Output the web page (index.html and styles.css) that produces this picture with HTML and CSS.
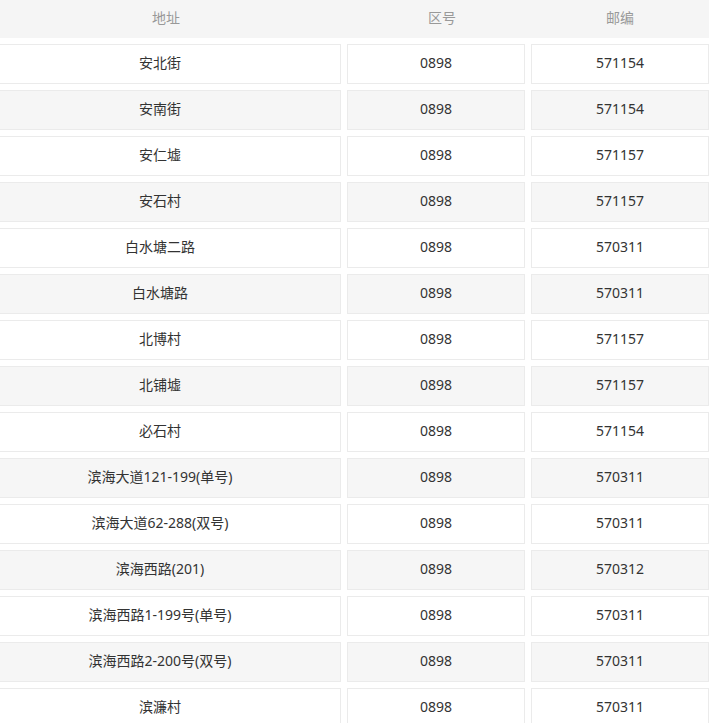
FILE: index.html
```html
<!DOCTYPE html>
<html lang="zh-CN">
<head>
<meta charset="utf-8">
<title>邮编列表</title>
<link rel="stylesheet" href="styles.css">
</head>
<body>
<div class="sheet">
  <div class="head">
    <div class="th">地址</div>
    <div class="th">区号</div>
    <div class="th">邮编</div>
  </div>
  <div class="rows">
    <div class="row"><div class="td">安北街</div><div class="td">0898</div><div class="td">571154</div></div>
    <div class="row alt"><div class="td">安南街</div><div class="td">0898</div><div class="td">571154</div></div>
    <div class="row"><div class="td">安仁墟</div><div class="td">0898</div><div class="td">571157</div></div>
    <div class="row alt"><div class="td">安石村</div><div class="td">0898</div><div class="td">571157</div></div>
    <div class="row"><div class="td">白水塘二路</div><div class="td">0898</div><div class="td">570311</div></div>
    <div class="row alt"><div class="td">白水塘路</div><div class="td">0898</div><div class="td">570311</div></div>
    <div class="row"><div class="td">北博村</div><div class="td">0898</div><div class="td">571157</div></div>
    <div class="row alt"><div class="td">北铺墟</div><div class="td">0898</div><div class="td">571157</div></div>
    <div class="row"><div class="td">必石村</div><div class="td">0898</div><div class="td">571154</div></div>
    <div class="row alt"><div class="td">滨海大道121-199(单号)</div><div class="td">0898</div><div class="td">570311</div></div>
    <div class="row"><div class="td">滨海大道62-288(双号)</div><div class="td">0898</div><div class="td">570311</div></div>
    <div class="row alt"><div class="td">滨海西路(201)</div><div class="td">0898</div><div class="td">570312</div></div>
    <div class="row"><div class="td">滨海西路1-199号(单号)</div><div class="td">0898</div><div class="td">570311</div></div>
    <div class="row alt"><div class="td">滨海西路2-200号(双号)</div><div class="td">0898</div><div class="td">570311</div></div>
    <div class="row"><div class="td">滨濂村</div><div class="td">0898</div><div class="td">570311</div></div>
  </div>
</div>
</body>
</html>
```
FILE: styles.css
```css
html, body {
  margin: 0;
  padding: 0;
  background: #ffffff;
  overflow: hidden;
}
body {
  font-family: "Noto Sans", "Noto Sans CJK SC", sans-serif;
  font-size: 14px;
  color: #333333;
}
.sheet {
  width: 730px;
  margin-left: -21px;
}
.head {
  display: grid;
  grid-template-columns: 374px 178px 178px;
  height: 38px;
  background: #f5f5f5;
  margin-bottom: 6px;
}
.th {
  text-align: center;
  line-height: 36px;
  color: #999999;
}
.rows {
  display: flex;
  flex-direction: column;
  gap: 6px;
}
.row {
  display: grid;
  grid-template-columns: 362px 178px 178px;
  column-gap: 6px;
}
.td {
  box-sizing: border-box;
  height: 40px;
  line-height: 36px;
  text-align: center;
  border: 1px solid #ebebeb;
  background: #ffffff;
  white-space: nowrap;
}
.row.alt .td {
  background: #f6f6f6;
}
```
